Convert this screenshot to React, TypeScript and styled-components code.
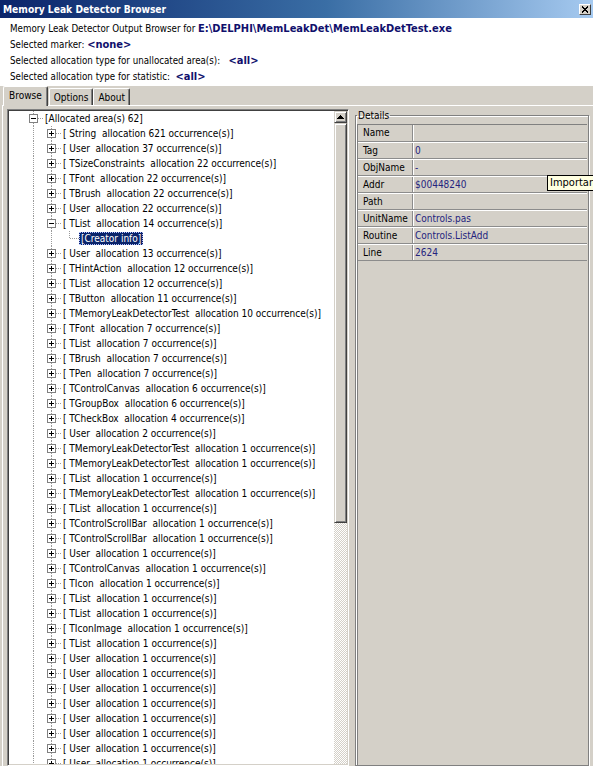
import React from "react";
import styled, { createGlobalStyle } from "styled-components";

const UI_FONT = `"DejaVu Sans Condensed", "Liberation Sans", Arial, sans-serif`;

const GlobalStyle = createGlobalStyle`
  html, body { margin: 0; padding: 0; background: #d4d0c8; }
  body { font-family: ${UI_FONT}; font-size: 10px; color: #000; }
  * { box-sizing: border-box; }
`;

const Window = styled.div`
  width: 593px;
  height: 766px;
  overflow: hidden;
  position: relative;
  display: flex;
  flex-direction: column;
  background: #d4d0c8;
`;

const TitleBar = styled.div`
  height: 18px;
  flex: 0 0 18px;
  display: flex;
  align-items: center;
  justify-content: space-between;
  padding: 0 2px 0 3px;
  background: linear-gradient(to right, #0a246a 0%, #3a6ea5 55%, #a6caf0 100%);
`;

const Title = styled.span`
  color: #fff;
  font-weight: bold;
  font-size: 10.2px;
`;

const CloseBtn = styled.span`
  width: 12px;
  height: 11px;
  display: flex;
  align-items: center;
  justify-content: center;
  background: #d4d0c8;
  border: 1px solid;
  border-color: #fff #404040 #404040 #fff;
`;

const Header = styled.div`
  flex: 0 0 68px;
  background: #fff;
  padding: 3px 0 1px 10px;
`;

const HeaderLine = styled.div`
  height: 16px;
  line-height: 16px;
  white-space: pre;
  font-size: 9.7px;
`;

const HeaderValue = styled.span`
  font-weight: bold;
  font-size: 11px;
  color: #10106c;
`;

const TabStrip = styled.div`
  flex: 0 0 19px;
  display: flex;
  align-items: flex-end;
  padding-left: 3px;
  position: relative;
  z-index: 1;
`;

const Tab = styled.div<{ $active?: boolean }>`
  height: ${(p) => (p.$active ? "20px" : "17px")};
  margin-bottom: ${(p) => (p.$active ? "-1px" : "0")};
  padding: ${(p) => (p.$active ? "2px 5px 0 5px" : "2px 4px 0 4px")};
  margin-right: ${(p) => (p.$active ? "1px" : "0")};
  background: #d4d0c8;
  border-top: 1px solid #fff;
  border-left: 1px solid #fff;
  border-right: 1px solid #404040;
  border-top-left-radius: 2px;
  border-top-right-radius: 2px;
  box-shadow: inset -1px 0 0 #808080;
  font-size: 10px;
  line-height: 14px;
`;

const TabPage = styled.div`
  flex: 1;
  min-height: 0;
  display: flex;
  margin-left: 2px;
  border-top: 1px solid #fff;
  border-left: 1px solid #fff;
  padding: 3px 0 0 4px;
`;

const TreePane = styled.div`
  flex: 0 0 342px;
  min-width: 0;
  display: flex;
  border: 1px solid;
  border-color: #808080 #fff #fff #808080;
  box-shadow: inset 1px 1px 0 #404040, inset -1px -1px 0 #d4d0c8;
  padding: 1px;
`;

const TreeArea = styled.div`
  flex: 1;
  min-width: 0;
  background: #fff;
  overflow: hidden;
  padding-left: 16px;
`;

const TreeRow = styled.div`
  height: 15px;
  display: flex;
  align-items: center;
`;

const vDots = "repeating-linear-gradient(to bottom, #9a9a9a 0 1px, transparent 1px 2px)";
const hDots = "repeating-linear-gradient(to right, #9a9a9a 0 1px, transparent 1px 2px)";

type VLine = "full" | "top" | "none";

const Cell = styled.span<{ $v: VLine; $h?: boolean }>`
  flex: 0 0 18px;
  height: 15px;
  display: flex;
  align-items: center;
  background-repeat: no-repeat;
  background-image: ${(p) =>
    [p.$v !== "none" ? vDots : null, p.$h ? hDots : null].filter(Boolean).join(", ") || "none"};
  background-size: ${(p) =>
    [p.$v === "full" ? "1px 100%" : p.$v === "top" ? "1px 8px" : null, p.$h ? "10px 1px" : null]
      .filter(Boolean)
      .join(", ") || "auto"};
  background-position: ${(p) =>
    [p.$v !== "none" ? "8px 0" : null, p.$h ? "9px 7px" : null].filter(Boolean).join(", ") || "0 0"};
`;

const Expander = styled.span`
  width: 9px;
  height: 9px;
  margin-left: 4px;
  margin-top: -1px;
  border: 1px solid #808080;
  background: #fff;
  display: flex;
  align-items: center;
  justify-content: center;
`;

const NodeLabel = styled.span<{ $selected?: boolean }>`
  padding: 0 2px;
  line-height: 13px;
  height: 13px;
  white-space: pre;
  font-size: 10px;
  background: ${(p) => (p.$selected ? "#0a246a" : "transparent")};
  color: ${(p) => (p.$selected ? "#fff" : "#000")};
  outline: ${(p) => (p.$selected ? "1px dotted #b8c4ff" : "none")};
  outline-offset: -1px;
`;

const ScrollBar = styled.div`
  flex: 0 0 13px;
  display: flex;
  flex-direction: column;
  background: repeating-conic-gradient(#fff 0 25%, #d4d0c8 0 50%) 0 0 / 2px 2px;
`;

const ScrollBtn = styled.div<{ $h: number }>`
  flex: 0 0 ${(p) => p.$h}px;
  background: #d4d0c8;
  border: 1px solid;
  border-color: #d4d0c8 #404040 #404040 #d4d0c8;
  box-shadow: inset 1px 1px 0 #fff, inset -1px -1px 0 #808080;
  display: flex;
  align-items: center;
  justify-content: center;
`;

const Splitter = styled.div`
  flex: 0 0 6px;
`;

const Group = styled.fieldset`
  flex: 1;
  min-width: 0;
  margin: 0 4px 0 0;
  padding: 2px 1px 0 1px;
  border: 1px solid #808080;
  box-shadow: inset 1px 1px 0 #fff, 1px 1px 0 #fff;
  display: flex;
  flex-direction: column;
`;

const Legend = styled.legend`
  padding: 0 1px;
  margin-left: 0;
  font-size: 10px;
  line-height: 13px;
`;

const Grid = styled.div`
  flex: 1;
  border-top: 1px solid #808080;
  border-left: 1px solid #808080;
  background: #d4d0c8;
`;

const GridRow = styled.div<{ $first?: boolean }>`
  height: 17px;
  display: grid;
  grid-template-columns: 55px 1fr;
  border-top: ${(p) => (p.$first ? "none" : "1px solid #fff")};
  border-bottom: 1px solid #8c8c8c;
  line-height: 15px;
  font-size: 10px;
`;

const GridLabel = styled.span`
  padding-left: 5px;
  border-right: 1px solid #8c8c8c;
  box-shadow: 1px 0 0 #fff;
  white-space: nowrap;
`;

const GridValue = styled.span`
  padding-left: 2px;
  color: #24247e;
  white-space: nowrap;
`;

const Tooltip = styled.div`
  position: absolute;
  left: 547px;
  top: 175px;
  height: 16px;
  padding: 0 2px;
  line-height: 14px;
  background: #ffffe1;
  border: 1px solid #000;
  font-size: 11px;
  white-space: nowrap;
`;

const PlusMinus = ({ plus }: { plus: boolean }) => (
  <svg width="7" height="7" viewBox="0 0 7 7" shapeRendering="crispEdges">
    <path d="M1 3.5H6" stroke="#000" strokeWidth="1" />
    {plus && <path d="M3.5 1V6" stroke="#000" strokeWidth="1" />}
  </svg>
);

type Node = { t: string; n: number };

const before: Node[] = [
  { t: "String", n: 621 },
  { t: "User", n: 37 },
  { t: "TSizeConstraints", n: 22 },
  { t: "TFont", n: 22 },
  { t: "TBrush", n: 22 },
  { t: "User", n: 22 },
];

const after: Node[] = [
  { t: "User", n: 13 },
  { t: "THintAction", n: 12 },
  { t: "TList", n: 12 },
  { t: "TButton", n: 11 },
  { t: "TMemoryLeakDetectorTest", n: 10 },
  { t: "TFont", n: 7 },
  { t: "TList", n: 7 },
  { t: "TBrush", n: 7 },
  { t: "TPen", n: 7 },
  { t: "TControlCanvas", n: 6 },
  { t: "TGroupBox", n: 6 },
  { t: "TCheckBox", n: 4 },
  { t: "User", n: 2 },
  { t: "TMemoryLeakDetectorTest", n: 1 },
  { t: "TMemoryLeakDetectorTest", n: 1 },
  { t: "TList", n: 1 },
  { t: "TMemoryLeakDetectorTest", n: 1 },
  { t: "TList", n: 1 },
  { t: "TControlScrollBar", n: 1 },
  { t: "TControlScrollBar", n: 1 },
  { t: "User", n: 1 },
  { t: "TControlCanvas", n: 1 },
  { t: "TIcon", n: 1 },
  { t: "TList", n: 1 },
  { t: "TList", n: 1 },
  { t: "TIconImage", n: 1 },
  { t: "TList", n: 1 },
  ...Array.from({ length: 8 }, () => ({ t: "User", n: 1 })),
];

const label = (x: Node) => `[ ${x.t}  allocation ${x.n} occurrence(s)]`;

const ChildRow = ({ node, expanded }: { node: Node; expanded?: boolean }) => (
  <TreeRow>
    <Cell $v="full" />
    <Cell $v="full" $h>
      <Expander>
        <PlusMinus plus={!expanded} />
      </Expander>
    </Cell>
    <NodeLabel>{label(node)}</NodeLabel>
  </TreeRow>
);

const details: [string, string][] = [
  ["Name", ""],
  ["Tag", "0"],
  ["ObjName", "-"],
  ["Addr", "$00448240"],
  ["Path", ""],
  ["UnitName", "Controls.pas"],
  ["Routine", "Controls.ListAdd"],
  ["Line", "2624"],
];

export default function App() {
  return (
    <>
      <GlobalStyle />
      <Window>
        <TitleBar>
          <Title>Memory Leak Detector Browser</Title>
          <CloseBtn>
            <svg width="8" height="7" viewBox="0 0 8 7" shapeRendering="crispEdges">
              <path d="M1 0L7 7M7 0L1 7" stroke="#000" strokeWidth="1.3" />
            </svg>
          </CloseBtn>
        </TitleBar>
        <Header>
          <HeaderLine>
            Memory Leak Detector Output Browser for <HeaderValue>E:\DELPHI\MemLeakDet\MemLeakDetTest.exe</HeaderValue>
          </HeaderLine>
          <HeaderLine>
            Selected marker: <HeaderValue>&lt;none&gt;</HeaderValue>
          </HeaderLine>
          <HeaderLine>
            Selected allocation type for unallocated area(s):   <HeaderValue>&lt;all&gt;</HeaderValue>
          </HeaderLine>
          <HeaderLine>
            Selected allocation type for statistic:  <HeaderValue>&lt;all&gt;</HeaderValue>
          </HeaderLine>
        </Header>
        <TabStrip>
          <Tab $active>Browse</Tab>
          <Tab>Options</Tab>
          <Tab>About</Tab>
        </TabStrip>
        <TabPage>
          <TreePane>
            <TreeArea>
              <TreeRow>
                <Cell $v="full" $h>
                  <Expander>
                    <PlusMinus plus={false} />
                  </Expander>
                </Cell>
                <NodeLabel>[Allocated area(s) 62]</NodeLabel>
              </TreeRow>
              {before.map((n, i) => (
                <ChildRow key={"b" + i} node={n} />
              ))}
              <ChildRow node={{ t: "TList", n: 14 }} expanded />
              <TreeRow>
                <Cell $v="full" />
                <Cell $v="full" />
                <Cell $v="top" $h />
                <NodeLabel $selected>[Creator info]</NodeLabel>
              </TreeRow>
              {after.map((n, i) => (
                <ChildRow key={"a" + i} node={n} />
              ))}
            </TreeArea>
            <ScrollBar>
              <ScrollBtn $h={12}>
                <svg width="7" height="4" viewBox="0 0 7 4" shapeRendering="crispEdges">
                  <path d="M3.5 0L7 4H0Z" fill="#000" />
                </svg>
              </ScrollBtn>
              <ScrollBtn $h={400} />
            </ScrollBar>
          </TreePane>
          <Splitter />
          <Group>
            <Legend>Details</Legend>
            <Grid>
              {details.map(([k, v], i) => (
                <GridRow key={k} $first={i === 0}>
                  <GridLabel>{k}</GridLabel>
                  <GridValue>{v}</GridValue>
                </GridRow>
              ))}
            </Grid>
          </Group>
        </TabPage>
        <Tooltip>Important</Tooltip>
      </Window>
    </>
  );
}
